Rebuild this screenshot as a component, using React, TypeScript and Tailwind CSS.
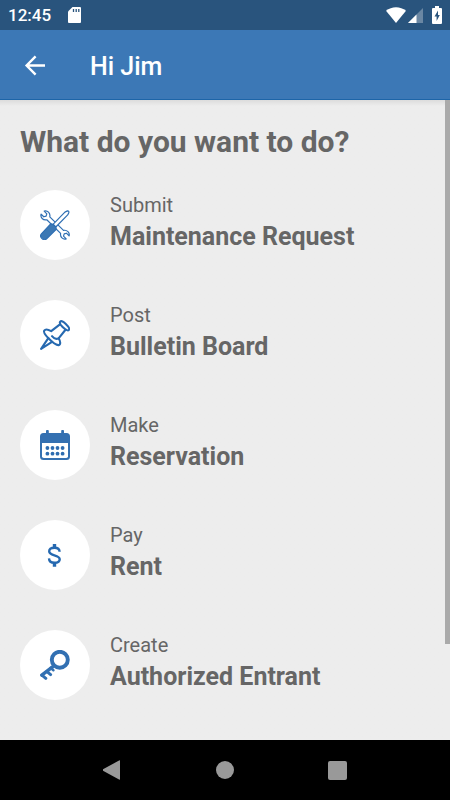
import type { ReactNode } from "react";

function ToolsIcon() {
  return (
    <svg viewBox="0 0 30 30" className="size-[30px]" fill="none" stroke="#2f6fb3" strokeWidth="1.2" strokeLinejoin="round" aria-hidden="true">
      <path d="M4.2 1.1 6.8 3.8 6.1 6.1 3.8 6.8 1.1 4.2C.1 7.4 3 10.6 6.8 9.8L20.6 23.4C19.9 27 23 30 26.2 28.9L23.5 26.2 24.2 23.9 26.4 23.2 29.1 25.9C30 22.6 27 19.6 23.5 20.4L9.8 6.9C10.6 3.1 7.4 .1 4.2 1.1Z" fill="#fff" />
      <path d="M13 14.3 24.9 2.1 27.4 .9C28.8 .8 29.3 2 28.6 3.3L27.7 4.9 15.8 17Z" fill="#fff" />
      <path d="M10.7 13.8 12.9 14.3 15.8 17.1 16.2 19.4 6.4 29C5.1 30 3.3 29.9 2 28.6.4 27 .3 25 1.6 23.6Z" fill="#3c78b4" />
    </svg>
  );
}

function PinIcon() {
  return (
    <svg viewBox="0 0 30 30" className="size-[30px]" fill="none" stroke="#2669b0" strokeWidth="2.1" strokeLinecap="round" strokeLinejoin="round" aria-hidden="true">
      <path d="M20.2 1.7C19 3.1 20.5 5 22.6 7.1 25 9.4 27.6 11.2 28.8 10 30 8.7 28.2 6.2 25.8 3.9 23.4 1.6 21.3.4 20.2 1.7Z" />
      <path d="M19.6 4.7 11.2 11.2C8.3 9.5 5.3 9.1 4.2 10.6 3.2 12.2 5.3 15.1 8.7 18.6 12.2 22.2 15.8 25.3 18.6 25.1 20.8 24.7 20.7 21.6 18.6 18.3L25.3 10" />
      <path d="M12 16.2C13.7 18.3 15.9 19.8 18.5 18.3M8.3 18.2 1.1 28.9 12 21.9" />
    </svg>
  );
}

function CalendarIcon() {
  return (
    <svg viewBox="0 0 30 30" className="size-[30px]" aria-hidden="true">
      <path d="M3.5 3H6V1.2a1.4 1.4 0 0 1 2.8 0V3h12.4V1.2a1.4 1.4 0 0 1 2.8 0V3h2.5A3.5 3.5 0 0 1 30 6.5v20a3.5 3.5 0 0 1-3.5 3.5h-23A3.5 3.5 0 0 1 0 26.5v-20A3.5 3.5 0 0 1 3.5 3Z" fill="#3470b1" />
      <path d="M2 13h26v13.2a1.8 1.8 0 0 1-1.8 1.8H3.8A1.8 1.8 0 0 1 2 26.2Z" fill="#fff" />
      <g fill="#2d6cb0">
        {[7.4, 12.5, 17.5, 22.6].map((x) => (
          <g key={x}>
            <circle cx={x} cy="18" r="1.9" />
            <circle cx={x} cy="23.7" r="1.9" />
          </g>
        ))}
      </g>
    </svg>
  );
}

function DollarIcon() {
  return (
    <svg viewBox="0 0 30 30" className="size-[30px]" fill="none" stroke="#2669b0" aria-hidden="true">
      <path d="M14.5 4V7.4M14.5 23V26.8" strokeWidth="3.4" />
      <path d="M19.6 11.8C19.5 9.2 17.5 7.8 14.5 7.8 11.4 7.8 9.2 9 9.2 11.3 9.2 13.5 11.1 14.4 14.4 15.3 17.7 16.2 19.7 17 19.7 19.3 19.7 21.6 17.5 22.8 14.5 22.8 11.2 22.8 9.1 21.5 9 18.4" strokeWidth="2.4" />
    </svg>
  );
}

function KeyIcon() {
  return (
    <svg viewBox="0 0 30 30" className="size-[30px]" fill="none" stroke="#3270b2" strokeLinecap="round" strokeLinejoin="round" aria-hidden="true">
      <circle cx="19.8" cy="9.8" r="8" strokeWidth="3.9" />
      <path d="M13.2 16.4 1.8 25.2" strokeWidth="3.4" />
      <path d="M2.2 25.4 5.8 28.4M7 21.6 10.6 24.6" strokeWidth="3" />
      <path d="M10.6 17.8 13.4 20.2" strokeWidth="2.6" />
    </svg>
  );
}

const actions: { verb: string; subject: string; icon: ReactNode }[] = [
  { verb: "Submit", subject: "Maintenance Request", icon: <ToolsIcon /> },
  { verb: "Post", subject: "Bulletin Board", icon: <PinIcon /> },
  { verb: "Make", subject: "Reservation", icon: <CalendarIcon /> },
  { verb: "Pay", subject: "Rent", icon: <DollarIcon /> },
  { verb: "Create", subject: "Authorized Entrant", icon: <KeyIcon /> },
];

function StatusBar() {
  return (
    <div className="flex h-[30px] items-center bg-[#29547d] px-2 text-white">
      <span className="w-11 text-[17px] leading-6 font-medium">12:45</span>
      <svg viewBox="0 0 13 16" className="ml-4 h-4 w-[13px]" aria-hidden="true">
        <path d="M4.5 0H12a1 1 0 0 1 1 1v14a1 1 0 0 1-1 1H1a1 1 0 0 1-1-1V4.5Z" fill="#fff" />
        <path d="M5.5 2v3M8.2 2v3M10.8 2v3" stroke="#29547d" strokeWidth="1.3" />
      </svg>
      <svg viewBox="0 0 20 16" className="ml-auto h-4 w-5" aria-hidden="true">
        <path d="M0 3.7C5.5-1 14.5-1 20 3.7L10 16Z" fill="#fff" />
      </svg>
      <svg viewBox="0 0 15 15" className="ml-[2px] size-[15px]" aria-hidden="true">
        <path d="M15 0V15H0Z" fill="#6a87a3" />
        <path d="M8.5 6.5V15H0Z" fill="#fff" />
      </svg>
      <svg viewBox="0 0 10 18" className="ml-[9px] h-[18px] w-[10px]" aria-hidden="true">
        <path d="M3 0h4v2h2a1 1 0 0 1 1 1v14a1 1 0 0 1-1 1H1a1 1 0 0 1-1-1V3a1 1 0 0 1 1-1h2Z" fill="#fff" />
        <path d="M6 4.5 2.5 10.5H4.6V15L7.8 9H6Z" fill="#29547d" />
      </svg>
    </div>
  );
}

function SystemNav() {
  return (
    <nav aria-label="System" className="flex h-[60px] items-center justify-center gap-[72px] bg-black text-[#999]">
      <button type="button" aria-label="Back" className="flex w-10 justify-center">
        <svg viewBox="0 0 20 20" className="size-5" fill="currentColor" aria-hidden="true">
          <path d="M16.5 .3Q17 0 17 1V19Q17 20 16.5 19.7L0 10.8Q-1 10 0 9.2Z" />
        </svg>
      </button>
      <button type="button" aria-label="Home" className="flex w-10 justify-center">
        <span className="size-[18px] rounded-full bg-current" />
      </button>
      <button type="button" aria-label="Recent apps" className="flex w-10 justify-center">
        <span className="size-[19px] rounded-xs bg-current" />
      </button>
    </nav>
  );
}

export default function App() {
  return (
    <div className="flex min-h-screen flex-col bg-[#ededed] font-[Roboto,sans-serif] text-[#666]">
      <StatusBar />
      <header className="flex h-[70px] items-center border-b border-[#1d65a8] bg-[#3c78b6] px-5 text-white">
        <button type="button" aria-label="Go back" className="flex w-[70px] items-center">
          <svg viewBox="0 0 30 30" className="size-[30px]" fill="none" stroke="currentColor" strokeWidth="2.4" aria-hidden="true">
            <path d="M25 15.5H7M15.6 6.4 6.6 15.5 15.6 24.6" />
          </svg>
        </button>
        <h1 className="pt-1 text-[25px] leading-[30px] font-medium">Hi Jim</h1>
      </header>
      <div className="flex flex-1">
        <main className="flex-1 bg-linear-to-b from-[#dcdcdc] to-[#ededed] to-[6px] px-5 pt-6 pb-9">
          <h2 className="text-[30px] leading-9 font-bold">What do you want to do?</h2>
          <ul className="mt-[30px] flex flex-col gap-10">
            {actions.map(({ verb, subject, icon }) => (
              <li key={subject}>
                <button type="button" className="flex w-full items-center gap-5 text-left">
                  <span className="flex size-[70px] shrink-0 items-center justify-center rounded-full bg-white">
                    {icon}
                  </span>
                  <span className="flex flex-col gap-[2px] pb-2">
                    <span className="text-xl leading-[30px]">{verb}</span>
                    <span className="text-[25px] leading-[30px] font-bold">{subject}</span>
                  </span>
                </button>
              </li>
            ))}
          </ul>
        </main>
        <div className="w-[5px]" aria-hidden="true">
          <div className="h-[85%] bg-[#aaa]" />
        </div>
      </div>
      <SystemNav />
    </div>
  );
}
